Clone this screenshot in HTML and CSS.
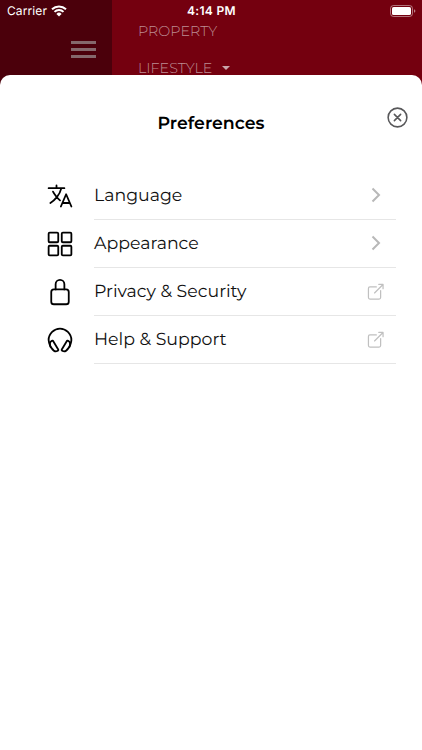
FILE: index.html
```html
<!DOCTYPE html>
<html lang="en">

<head>
    <meta charset="utf-8">
    <title>Preferences</title>
    <link rel="stylesheet" href="styles.css">
</head>

<body>

    <div class="screen">
        <!-- page behind the sheet -->
        <div class="backdrop">
            <div class="side">
                <div class="hamburger"><span></span><span></span><span></span></div>
            </div>
            <div class="menu">
                <div class="menu-item">PROPERTY</div>
                <div class="menu-item">LIFESTYLE <i class="caret"></i></div>
            </div>
        </div>

        <div class="status-bar">
            <div class="carrier">
                <span>Carrier</span>
                <svg class="wifi" viewBox="0 0 16 12">
                    <path d="M1 4.2a10.2 10.2 0 0 1 14 0M3.5 6.9a6.5 6.5 0 0 1 9 0" fill="none" stroke="#fff" stroke-width="2" />
                    <path d="M5.4 8.9a3.7 3.7 0 0 1 5.2 0L8 11.6z" fill="#fff" />
                </svg>
            </div>
            <div class="time">4:14 PM</div>
            <svg class="battery" viewBox="0 0 26 12">
                <rect x="0.5" y="0.5" width="22" height="11" rx="3" fill="none" stroke="#fff" stroke-opacity="0.45" />
                <rect x="2" y="2" width="19" height="8" rx="1.6" fill="#fff" />
                <path d="M24 4.2q1.4.6 1.4 1.8T24 7.8z" fill="#fff" fill-opacity="0.5" />
            </svg>
        </div>

        <div class="sheet">
            <div class="sheet-header">
                <h1>Preferences</h1>
                <svg class="close" viewBox="0 0 512 512">
                    <circle cx="256" cy="256" r="192" />
                    <path d="M320 320L192 192M192 320l128-128" />
                </svg>
            </div>

            <ul class="list">
                <li class="row">
                    <svg class="icon" viewBox="0 0 512 512">
                        <path d="M48 112h288M192 64v48M272 448l96-224 96 224M301.5 384h133M281.3 112S257 206 199 277 80 384 80 384M256 336s-35-27-72-75-56-85-56-85" />
                    </svg>
                    <div class="row-body">
                        <span class="label">Language</span>
                        <svg class="chevron" viewBox="0 0 10 16"><path d="M1.5 1.5L8 8l-6.5 6.5" /></svg>
                    </div>
                </li>
                <li class="row">
                    <svg class="icon" viewBox="0 0 512 512">
                        <rect x="48" y="48" width="176" height="176" rx="20" />
                        <rect x="288" y="48" width="176" height="176" rx="20" />
                        <rect x="48" y="288" width="176" height="176" rx="20" />
                        <rect x="288" y="288" width="176" height="176" rx="20" />
                    </svg>
                    <div class="row-body">
                        <span class="label">Appearance</span>
                        <svg class="chevron" viewBox="0 0 10 16"><path d="M1.5 1.5L8 8l-6.5 6.5" /></svg>
                    </div>
                </li>
                <li class="row">
                    <svg class="icon" viewBox="0 0 512 512">
                        <path d="M336 208v-95a80 80 0 0 0-160 0v95" />
                        <rect x="96" y="208" width="320" height="272" rx="48" />
                    </svg>
                    <div class="row-body">
                        <span class="label">Privacy &amp; Security</span>
                        <svg class="external" viewBox="0 0 512 512">
                            <path d="M384 224v184a40 40 0 0 1-40 40H104a40 40 0 0 1-40-40V168a40 40 0 0 1 40-40h167.48M336 64h112v112M224 288L440 72" />
                        </svg>
                    </div>
                </li>
                <li class="row">
                    <svg class="icon" viewBox="0 0 512 512">
                        <path d="M83 384c-13-33-35-93.37-35-128C48 141.12 149.33 48 256 48s208 93.12 208 208c0 34.23-23 97-35 128" />
                        <path d="M108.39 270.13l-13.69 8c-30.23 17.7-31.7 72.41 3.38 122.2s75.87 75.81 106.1 58.12l13.69-8a16.16 16.16 0 0 0 5.78-21.87L130 276a15.74 15.74 0 0 0-21.61-5.87zM403.61 270.13l13.69 8c30.23 17.69 31.74 72.4-3.38 122.19s-75.87 75.81-106.1 58.12l-13.69-8a16.16 16.16 0 0 1-5.78-21.87L382 276a15.74 15.74 0 0 1 21.61-5.87z" />
                    </svg>
                    <div class="row-body">
                        <span class="label">Help &amp; Support</span>
                        <svg class="external" viewBox="0 0 512 512">
                            <path d="M384 224v184a40 40 0 0 1-40 40H104a40 40 0 0 1-40-40V168a40 40 0 0 1 40-40h167.48M336 64h112v112M224 288L440 72" />
                        </svg>
                    </div>
                </li>
            </ul>
        </div>
    </div>

</body>
</html>
```

FILE: styles.css
```css
* {
    box-sizing: border-box;
}

body {
    margin: 0;
    font-family: Montserrat, Inter, "Open Sans", sans-serif;
    background-color: #fff;
    text-rendering: geometricPrecision;
}

.screen {
    position: relative;
    width: 422px;
    height: 750px;
    overflow: hidden;
}

.backdrop {
    display: flex;
    height: 90px;
    background-color: #74000f;
}

.side {
    width: 112px;
    padding: 41px 0 0 71.4px;
    background-color: #4b000b;
}

.hamburger {
    display: flex;
    flex-direction: column;
    gap: 4px;
    width: 25px;
}

.hamburger span {
    height: 3px;
    background-color: #85686c;
}

.menu {
    padding: 22px 0 0 26px;
}

.menu-item {
    display: flex;
    align-items: center;
    height: 18px;
    margin-bottom: 19px;
    font-size: 14.3px;
    font-weight: 300;
    color: #bd8d93;
}

.caret {
    margin-left: 10px;
    border: 4.5px solid transparent;
    border-top-color: #c9a5aa;
    border-bottom: 0;
}

.status-bar {
    position: absolute;
    top: 0;
    left: 0;
    display: grid;
    grid-template-columns: 1fr auto 1fr;
    align-items: center;
    width: 422px;
    height: 21px;
    padding: 0 6px 0 7px;
    color: #fff;
}

.carrier {
    display: flex;
    align-items: center;
    gap: 4px;
    font-family: Inter, sans-serif;
    font-size: 12px;
    letter-spacing: 0.1px;
}

.wifi {
    width: 16px;
    height: 12px;
}

.time {
    font-family: Inter, sans-serif;
    font-size: 12px;
    font-weight: 600;
    letter-spacing: 0.3px;
}

.battery {
    justify-self: end;
    width: 26px;
    height: 12px;
}

.sheet {
    position: absolute;
    top: 75px;
    left: 0;
    width: 422px;
    height: 675px;
    background-color: #fff;
    border-radius: 10px 10px 0 0;
}

.sheet-header {
    display: grid;
    grid-template-columns: 1fr auto 1fr;
    height: 96.5px;
    padding: 30px 12px 0;
}

h1 {
    grid-column: 2;
    margin: 7px 0 0;
    font-size: 17.4px;
    line-height: 24px;
    font-weight: 600;
    color: #000;
}

.close {
    justify-self: end;
    width: 25px;
    height: 25px;
    fill: none;
    stroke: #58585a;
    stroke-width: 32;
    stroke-linecap: round;
}

.list {
    margin: 0;
    padding: 0 26px 0 46px;
    list-style: none;
}

.row {
    display: flex;
    align-items: center;
    gap: 20px;
    height: 48.15px;
}

.icon {
    width: 28px;
    height: 28px;
    fill: none;
    stroke: #000;
    stroke-width: 33;
    stroke-linecap: round;
    stroke-linejoin: round;
}

.row-body {
    display: flex;
    flex: 1;
    align-items: center;
    justify-content: space-between;
    height: 100%;
    border-bottom: 1px solid #e6e6e6;
}

.label {
    padding-top: 1px;
    font-size: 17.35px;
    color: #111;
}

.chevron {
    width: 10px;
    height: 16px;
    margin-right: 15px;
    fill: none;
    stroke: #b8b8b8;
    stroke-width: 2;
}

.external {
    width: 19.5px;
    height: 19.5px;
    margin-right: 11px;
    fill: none;
    stroke: #c0c0c0;
    stroke-width: 32;
    stroke-linecap: round;
    stroke-linejoin: round;
}
```
